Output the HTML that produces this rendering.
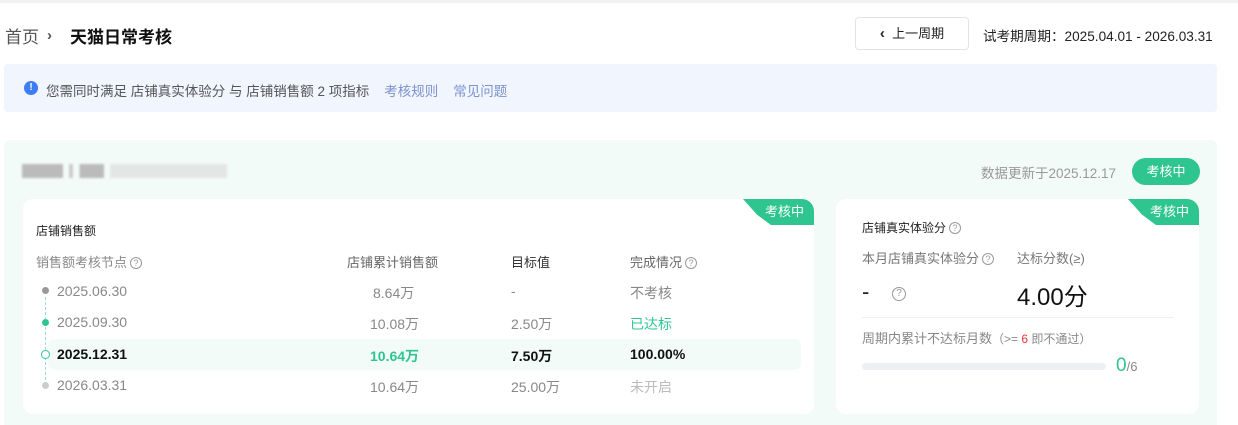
<!DOCTYPE html>
<html><head><meta charset="utf-8"><style>
*{margin:0;padding:0;box-sizing:border-box}
html,body{width:1238px;height:425px;overflow:hidden}
body{background:#fff;font-family:"Liberation Sans","Noto Sans CJK SC",sans-serif;position:relative;color:#333}
.a{position:absolute;white-space:nowrap}
.q{display:inline-block;width:12px;height:12px;border:1px solid #999;border-radius:50%;font-size:9px;line-height:10px;text-align:center;color:#999;vertical-align:1px;margin-left:3px}
.tag{position:absolute;top:0;right:0;height:26px;background:#2fc591;color:#fff;font-size:13px;line-height:26px;padding:0 10px 0 22px;border-radius:0 12px 0 0;clip-path:polygon(0 0,100% 0,100% 100%,28px 100%,14px 60%)}
.c{font-size:14px;color:#888}
.h{font-size:13px;color:#888}
</style></head><body>
<div class="a" style="left:0;top:0;width:1238px;height:3px;background:#f2f2f2"></div>
<div class="a" style="left:5px;top:23px;font-size:17px;color:#555">首页</div>
<div class="a" style="left:47px;top:27px;font-size:15px;color:#555;font-weight:bold">›</div>
<div class="a" style="left:70px;top:23px;font-size:17px;font-weight:bold;color:#111">天猫日常考核</div>
<div class="a" style="left:855px;top:17px;width:114px;height:33px;border:1px solid #e3e3e3;border-radius:4px;font-size:13px;line-height:31px;text-align:center;color:#222"><b style="font-size:15px">‹</b>&nbsp; 上一周期</div>
<div class="a" style="left:983px;top:25px;font-size:13.6px;color:#222">试考期周期：2025.04.01 - 2026.03.31</div>
<div class="a" style="left:4px;top:64px;width:1213px;height:48px;background:#f0f5fe;border-radius:4px"></div>
<div class="a" style="left:24px;top:81px;width:14px;height:14px;border-radius:50%;background:#3d7ef5;color:#fff;font-size:10px;font-weight:bold;line-height:14px;text-align:center">!</div>
<div class="a" style="left:46px;top:80px;font-size:13.5px;color:#555">您需同时满足 店铺真实体验分 与 店铺销售额 2 项指标&nbsp;&nbsp;&nbsp; <span style="color:#7d92cf">考核规则</span>&nbsp;&nbsp;&nbsp; <span style="color:#7d92cf">常见问题</span></div>
<div class="a" style="left:4px;top:140px;width:1213px;height:300px;background:#f3fbf8;border-radius:6px"></div>
<div class="a" style="left:22px;top:164px;width:205px;height:14px;background:linear-gradient(90deg,#bbb 0 20%,#f3fbf8 20% 23%,#ccc 23% 25%,#f3fbf8 25% 28%,#bbb 28% 40%,#f3fbf8 40% 43%,#e2e6e4 43% 100%);filter:blur(1px)"></div>
<div class="a" style="left:981px;top:162px;font-size:13.5px;color:#999">数据更新于2025.12.17</div>
<div class="a" style="left:1132px;top:158px;width:68px;height:27px;border-radius:14px;background:#2fc591;color:#fff;font-size:13px;line-height:27px;text-align:center">考核中</div>
<div class="a" style="left:23px;top:199px;width:791px;height:215px;background:#fff;border-radius:10px"><div class="tag">考核中</div></div>
<div class="a" style="left:36px;top:222px;font-size:12px;color:#222">店铺销售额</div>
<div class="a h" style="left:36px;top:252px">销售额考核节点<span class="q">?</span></div>
<div class="a h" style="left:347px;top:252px;color:#666">店铺累计销售额</div>
<div class="a h" style="left:511px;top:252px;color:#333">目标值</div>
<div class="a h" style="left:630px;top:252px;color:#666">完成情况<span class="q">?</span></div>
<div class="a" style="left:48px;top:339px;width:753px;height:31px;background:#f3fbf8;border-radius:6px"></div>
<div class="a" style="left:45px;top:297px;height:88px;border-left:1px dashed #9ee0c6"></div>
<div class="a" style="left:42px;top:287px;width:7px;height:7px;border-radius:50%;background:#999"></div>
<div class="a" style="left:42px;top:319px;width:7px;height:7px;border-radius:50%;background:#2fc591"></div>
<div class="a" style="left:41px;top:350px;width:9px;height:9px;border-radius:50%;background:#fff;border:1.5px solid #2fc591"></div>
<div class="a" style="left:42px;top:382px;width:7px;height:7px;border-radius:50%;background:#ccc"></div>
<div class="a c" style="left:57px;top:283px">2025.06.30</div>
<div class="a c" style="left:373px;top:283px">8.64万</div>
<div class="a c" style="left:511px;top:283px">-</div>
<div class="a c" style="left:630px;top:283px">不考核</div>
<div class="a c" style="left:57px;top:314px">2025.09.30</div>
<div class="a c" style="left:370px;top:314px">10.08万</div>
<div class="a c" style="left:511px;top:314px">2.50万</div>
<div class="a c" style="left:630px;top:314px;color:#2fc591">已达标</div>
<div class="a" style="left:57px;top:346px;font-size:14px;font-weight:bold;color:#111">2025.12.31</div>
<div class="a" style="left:370px;top:346px;font-size:14px;font-weight:bold;color:#2fc591">10.64万</div>
<div class="a" style="left:511px;top:346px;font-size:14px;font-weight:bold;color:#111">7.50万</div>
<div class="a" style="left:630px;top:346px;font-size:14px;font-weight:bold;color:#111">100.00%</div>
<div class="a c" style="left:57px;top:377px">2026.03.31</div>
<div class="a c" style="left:370px;top:377px">10.64万</div>
<div class="a c" style="left:511px;top:377px">25.00万</div>
<div class="a c" style="left:630px;top:377px;color:#bbb">未开启</div>
<div class="a" style="left:836px;top:199px;width:363px;height:215px;background:#fff;border-radius:10px"><div class="tag">考核中</div></div>
<div class="a" style="left:862px;top:219px;font-size:12px;color:#222">店铺真实体验分<span class="q">?</span></div>
<div class="a h" style="left:862px;top:248px;color:#777">本月店铺真实体验分<span class="q">?</span></div>
<div class="a h" style="left:1017px;top:248px;color:#777">达标分数(≥)</div>
<div class="a" style="left:862px;top:279px;font-size:22px;color:#222">-</div>
<div class="a" style="left:892px;top:287px;width:14px;height:14px;border:1.5px solid #999;border-radius:50%;font-size:10px;line-height:11px;text-align:center;color:#999">?</div>
<div class="a" style="left:1017px;top:277px;font-size:24px;color:#111">4.00分</div>
<div class="a" style="left:862px;top:317px;width:312px;height:1px;background:#f0f0f0"></div>
<div class="a h" style="left:862px;top:328px;color:#888">周期内累计不达标月数<span style="font-size:12px">（&gt;= <span style="color:#e33">6</span> 即不通过）</span></div>
<div class="a" style="left:862px;top:363px;width:244px;height:7px;background:#eeeff2;border-radius:4px"></div>
<div class="a" style="left:1116px;top:355px;font-size:19px;color:#2fc591">0<span style="font-size:13px;color:#888">/6</span></div>
</body></html>
